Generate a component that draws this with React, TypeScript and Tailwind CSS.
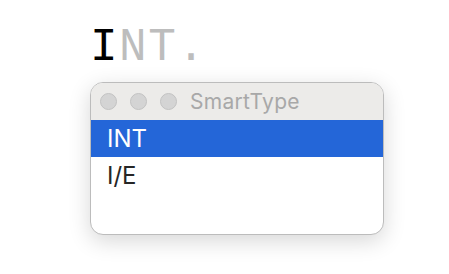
import React from "react";

export default function App() {
  return (
    <div className="w-[449px] h-[274px] bg-white overflow-hidden flex flex-col">
      <div
        className="pl-[90px] pt-[25px] h-[82px] text-[46px] leading-[46px] tracking-[1.5px] whitespace-nowrap shrink-0"
        style={{ fontFamily: '"Liberation Mono", monospace' }}
      >
        <span className="text-black">I</span>
        <span className="text-[#bdbdbd]">NT.</span>
      </div>
      <div
        className="ml-[90px] w-[294px] h-[153px] rounded-[13px] border border-[#bcbcbc] bg-white overflow-hidden flex flex-col shrink-0 shadow-[0_6px_22px_rgba(0,0,0,0.16)]"
        style={{ fontFamily: 'Inter, "Liberation Sans", sans-serif' }}
      >
        <div className="h-[37px] bg-[#ecebe9] flex items-center pl-[9px] gap-[13px] shrink-0">
          <div className="w-[17px] h-[17px] rounded-full bg-[#d4d4d4] border border-[#c2c2c2]" />
          <div className="w-[17px] h-[17px] rounded-full bg-[#d4d4d4] border border-[#c2c2c2]" />
          <div className="w-[17px] h-[17px] rounded-full bg-[#d4d4d4] border border-[#c2c2c2]" />
          <span className="text-[21px] text-[#a8a8a8] tracking-[0.3px]">SmartType</span>
        </div>
        <div className="h-[37px] bg-[#2466d8] text-white text-[24px] flex items-center pl-[16px] shrink-0">
          INT
        </div>
        <div className="h-[37px] text-[#262626] text-[24px] flex items-center pl-[16px] shrink-0">
          I/E
        </div>
      </div>
    </div>
  );
}
